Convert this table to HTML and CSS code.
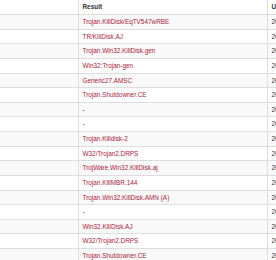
FILE: index.html
```html
<!DOCTYPE html>
<html>
<head>
<meta charset="utf-8">
<link rel="stylesheet" href="styles.css">
</head>
<body>
<div class="wrap">
<table class="scan">
<colgroup><col class="c1"><col class="c2"><col class="c3"></colgroup>
<thead>
<tr><th></th><th>Result</th><th>Update</th></tr>
</thead>
<tbody>
<tr><td></td><td class="res">Trojan.KillDisk/EqTV547wRBE</td><td>20161228</td></tr>
<tr><td></td><td class="res">TR/KillDisk.AJ</td><td>20161228</td></tr>
<tr><td></td><td class="res">Trojan.Win32.KillDisk.gen</td><td>20161228</td></tr>
<tr><td></td><td class="res">Win32:Trojan-gen</td><td>20161228</td></tr>
<tr><td></td><td class="res">Generic27.AMSC</td><td>20161228</td></tr>
<tr><td></td><td class="res">Trojan.Shutdowner.CE</td><td>20161228</td></tr>
<tr><td></td><td class="none">-</td><td>20161228</td></tr>
<tr><td></td><td class="none">-</td><td>20161228</td></tr>
<tr><td></td><td class="res">Trojan.Killdisk-2</td><td>20161228</td></tr>
<tr><td></td><td class="res">W32/Trojan2.DRPS</td><td>20161228</td></tr>
<tr><td></td><td class="res">TrojWare.Win32.KillDisk.aj</td><td>20161228</td></tr>
<tr><td></td><td class="res">Trojan.KillMBR.144</td><td>20161228</td></tr>
<tr><td></td><td class="res">Trojan.Win32.KillDisk.AMN (A)</td><td>20161228</td></tr>
<tr><td></td><td class="none">-</td><td>20161228</td></tr>
<tr><td></td><td class="res">Win32.KillDisk.AJ</td><td>20161228</td></tr>
<tr><td></td><td class="res">W32/Trojan2.DRPS</td><td>20161228</td></tr>
<tr><td></td><td class="res">Trojan.Shutdowner.CE</td><td>20161228</td></tr>
</tbody>
</table>
</div>
</body>
</html>
```

FILE: styles.css
```css
html, body {
  margin: 0;
  padding: 0;
  background: #fff;
}
.wrap {
  width: 276px;
  height: 260px;
  overflow: hidden;
}
.scan {
  border-collapse: collapse;
  table-layout: fixed;
  width: 310px;
  font-family: "Liberation Sans", Arial, sans-serif;
  font-size: 6.4px;
  color: #333;
}
.c1 { width: 78px; }
.c2 { width: 189px; }
.c3 { width: 43px; }
.scan th, .scan td {
  padding: 0 4px;
  text-align: left;
  white-space: nowrap;
  overflow: hidden;
  vertical-align: middle;
}
.scan th {
  height: 14px;
  line-height: 14px;
  font-weight: bold;
  border-bottom: 1px solid #ddd;
}
.scan td {
  height: 14.625px;
  line-height: 13.625px;
  border-top: 1px solid #ddd;
  box-sizing: border-box;
}
.scan th + th, .scan td + td {
  border-left: 1px solid #ddd;
}
.scan tbody tr:nth-child(odd) td {
  background: #f9f9f9;
}
.res {
  color: #a8223a;
}
.none {
  color: #333;
}
```
